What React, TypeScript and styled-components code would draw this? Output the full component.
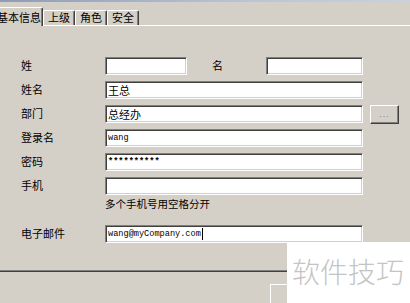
import React from "react";
import styled, { createGlobalStyle } from "styled-components";

const Global = createGlobalStyle`
  html, body { margin: 0; padding: 0; background: #d4d0c8; overflow: hidden; }
  body { font-family: "Noto Sans CJK SC", "Noto Sans", sans-serif; }
`;

const Screen = styled.div`
  position: relative;
  width: 410px;
  height: 303px;
  overflow: hidden;
  background: #d4d0c8;
`;

const TitleEdge = styled.div`
  height: 2px;
  background: linear-gradient(to right, #8d9cb8, #b9c4d6 60%, #c9d1de);
`;

const Dialog = styled.div`
  margin-left: -6px;
  width: 430px;
`;

const TabBar = styled.div`
  display: flex;
  align-items: flex-end;
  height: 18px;
  margin-top: 5px;
`;

const Tab = styled.div<{ $active?: boolean }>`
  position: relative;
  z-index: ${(p) => (p.$active ? 2 : 1)};
  box-sizing: border-box;
  height: ${(p) => (p.$active ? 19 : 15)}px;
  margin-bottom: ${(p) => (p.$active ? -1 : 0)}px;
  padding: ${(p) => (p.$active ? "2px 1px 0 2px" : "0 4px 0 4px")};
  background: #d4d0c8;
  border-top: 1px solid #fff;
  border-left: 1px solid #fff;
  border-right: 1px solid #404040;
  box-shadow: inset -1px 0 #808080;
  border-radius: 2px 2px 0 0;
  font-size: 11px;
  line-height: ${(p) => (p.$active ? 15 : 13)}px;
  color: #000;
  white-space: nowrap;
`;

const Panel = styled.div`
  box-sizing: border-box;
  height: 247px;
  border-top: 1px solid #fff;
  border-left: 1px solid #fff;
  border-bottom: 1px solid #404040;
  box-shadow: inset 0 -1px #808080;
  padding: 31px 0 0 26px;
  display: flex;
  flex-direction: column;
  gap: 6px;
`;

const Row = styled.div<{ $mt?: number }>`
  display: flex;
  align-items: center;
  height: 18px;
  margin-top: ${(p) => p.$mt ?? 0}px;
`;

const Label = styled.span<{ $w?: number; $ml?: number }>`
  flex: none;
  width: ${(p) => p.$w ?? 84}px;
  margin-left: ${(p) => p.$ml ?? 0}px;
  font-size: 11px;
  line-height: 16px;
  padding-bottom: 2px;
  color: #000;
  white-space: nowrap;
`;

const Field = styled.div<{ $w: number; $mono?: boolean; $bold?: boolean }>`
  flex: none;
  box-sizing: border-box;
  width: ${(p) => p.$w}px;
  height: 18px;
  background: #fff;
  border: 1px solid;
  border-color: #808080 #fff #fff #808080;
  box-shadow: inset 1px 1px #404040, inset -1px -1px #d4d0c8;
  padding: 0 2px 0 2px;
  font-family: ${(p) =>
    p.$mono ? '"Liberation Mono", monospace' : '"Noto Sans CJK SC", sans-serif'};
  font-size: ${(p) => (p.$mono ? "8.6px" : "11px")};
  font-weight: ${(p) => (p.$bold ? 700 : 400)};
  color: #000;
  line-height: 16px;
  white-space: nowrap;
  overflow: hidden;
  display: flex;
  align-items: center;
`;

const Caret = styled.span`
  display: inline-block;
  width: 1px;
  height: 12px;
  background: #000;
  margin-left: 1px;
`;

const DotsButton = styled.div`
  flex: none;
  margin-left: 7px;
  box-sizing: border-box;
  width: 29px;
  height: 19px;
  background: #d4d0c8;
  border: 1px solid;
  border-color: #fff #404040 #404040 #fff;
  box-shadow: inset -1px -1px #808080;
  font-family: "Liberation Sans", sans-serif;
  font-size: 9px;
  letter-spacing: 1px;
  color: #808080;
  display: flex;
  align-items: center;
  justify-content: center;
`;

const Hint = styled.div`
  margin-top: -4px;
  padding-left: 84px;
  font-size: 10.5px;
  line-height: 14px;
  color: #000;
`;

const ButtonRow = styled.div`
  display: flex;
  padding: 12px 0 0 276px;
`;

const PushButton = styled.div`
  box-sizing: border-box;
  width: 80px;
  height: 24px;
  background: #d4d0c8;
  border: 1px solid;
  border-color: #fff #404040 #404040 #fff;
  box-shadow: inset -1px -1px #808080;
`;

const Watermark = styled.div`
  position: absolute;
  right: 0;
  bottom: 0;
  width: 123px;
  height: 61px;
  box-sizing: border-box;
  background: #fff;
  padding: 0 0 3px 5px;
  display: flex;
  align-items: center;
  font-family: "Noto Sans CJK SC", sans-serif;
  font-weight: 300;
  font-size: 28px;
  color: #c4c4c4;
  white-space: nowrap;
`;

export default function App() {
  return (
    <>
      <Global />
      <Screen>
        <TitleEdge />
        <Dialog>
          <TabBar>
            <Tab $active>基本信息</Tab>
            <Tab>上级</Tab>
            <Tab>角色</Tab>
            <Tab>安全</Tab>
          </TabBar>
          <Panel>
            <Row>
              <Label>姓</Label>
              <Field $w={82} />
              <Label $w={54} $ml={25}>名</Label>
              <Field $w={97} />
            </Row>
            <Row>
              <Label>姓名</Label>
              <Field $w={258}>王总</Field>
            </Row>
            <Row>
              <Label>部门</Label>
              <Field $w={258}>总经办</Field>
              <DotsButton>...</DotsButton>
            </Row>
            <Row>
              <Label>登录名</Label>
              <Field $w={258} $mono>wang</Field>
            </Row>
            <Row>
              <Label>密码</Label>
              <Field $w={258} $mono $bold>**********</Field>
            </Row>
            <Row>
              <Label>手机</Label>
              <Field $w={258} />
            </Row>
            <Hint>多个手机号用空格分开</Hint>
            <Row $mt={8}>
              <Label>电子邮件</Label>
              <Field $w={258} $mono>
                wang@myCompany.com
                <Caret />
              </Field>
            </Row>
          </Panel>
          <ButtonRow>
            <PushButton />
          </ButtonRow>
        </Dialog>
        <Watermark>软件技巧</Watermark>
      </Screen>
    </>
  );
}
